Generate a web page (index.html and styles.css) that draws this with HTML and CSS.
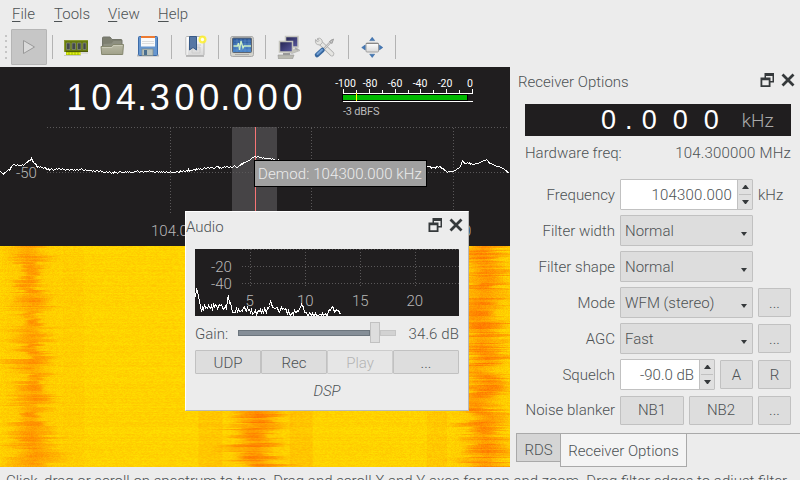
FILE: index.html
```html
<!DOCTYPE html>
<html lang="en">
<head>
<meta charset="utf-8">
<title>Receiver</title>
<link rel="stylesheet" href="styles.css">
</head>
<body>
<svg width="0" height="0" class="defs">
  <defs>
    <linearGradient id="paper" x1="0" y1="0" x2="0" y2="1"><stop offset="0" stop-color="#fff"/><stop offset="1" stop-color="#d8d8d8"/></linearGradient>
    <linearGradient id="screen" x1="0" y1="0" x2="0" y2="1"><stop offset="0" stop-color="#2a5594"/><stop offset="1" stop-color="#4a86cc"/></linearGradient>
    <linearGradient id="lcd" x1="0" y1="0" x2="1" y2="1"><stop offset="0" stop-color="#23234f"/><stop offset="1" stop-color="#5a5aa0"/></linearGradient>
    <linearGradient id="folder" x1="0" y1="0" x2="0" y2="1"><stop offset="0" stop-color="#babaa5"/><stop offset="1" stop-color="#a0a18a"/></linearGradient>
  </defs>
  <symbol id="dock-float" viewBox="0 0 14 14"><path d="M4.500 4.500V0H14v9.500h-3.500V8h2V3H6v1.500zM.500 4.500h10V14H.500zM2.300 7.300v5h6.400v-5z" fill="#35393b" fill-rule="evenodd"/></symbol>
  <symbol id="dock-close" viewBox="0 0 14 14"><path d="M1.500 1.500l11 11M12.500 1.500l-11 11" stroke="#35393b" stroke-width="2.800"/></symbol>
</svg>
<nav class="menubar">
  <span class="m1"><u>F</u>ile</span><span class="m2"><u>T</u>ools</span><span class="m3"><u>V</u>iew</span><span class="m4"><u>H</u>elp</span>
</nav>
<div class="toolbar">
  <span class="grip"></span>
  <button class="play"><svg width="12" height="16" viewBox="0 0 12 16"><path d="M.5 1.500L11.500 8L.5 14.500z" fill="#dadada" stroke="#999"/></svg></button>
  <i class="sep"></i>
  <svg class="ic" viewBox="0 0 24 24"><rect x="0" y="5.500" width="24" height="11.500" fill="#687c10"/><path d="M0 5.500h24M.5 6v11" stroke="#8b9b32"/><rect x="2" y="17" width="14.500" height="3" fill="#9bb900"/><path d="M2.500 18.500h14" stroke="#e9f31b" stroke-width="2" stroke-dasharray="2 1"/><path d="M2 16.500h22" stroke="#4c5a0b"/><path d="M2.500 8h3.500v6.500H2.500zM8 8h3.500v6.500H8zM13.500 8h3.500v6.500h-3.500zM19 8h3v6.500h-3z" fill="#43484a" stroke="#8d938a" stroke-width=".6"/><path d="M0 20.500h17M17 18h7" stroke="#bbb" stroke-opacity=".7"/></svg>
  <svg class="ic" viewBox="0 0 24 24"><path d="M2.500 12V3q0-1 1-1h6.500l2 2.500h9q1 0 1 1V12z" fill="#7d7f70" stroke="#73756a"/><path d="M3.500 9l8-.5 2-2.500h8v5h-18z" fill="#8d8f80"/><path d="M1 11.500h10.500l1.500-2h10.500l-.8 10h-21z" fill="url(#folder)" stroke="#85876f"/><path d="M2 12.500h10l1.500-2h9" fill="none" stroke="#cbcbb9"/></svg>
  <svg class="ic" viewBox="0 0 24 24"><path d="M1 20.500h22" stroke="#bbb" stroke-width="2"/><rect x="2.500" y="1.500" width="19" height="19" rx="1" fill="#6696cf" stroke="#3c6ba8"/><rect x="5" y="1" width="14" height="10.500" fill="#fafafa"/><rect x="5" y="1" width="14" height="2" fill="#ee7b32"/><path d="M6 6.500h12M6 8.500h12" stroke="#ddd"/><rect x="6" y="14" width="11" height="6.500" fill="#b9c2bc" stroke="#7e8987" stroke-width=".7"/><path d="M8 15h3v5H8z" fill="#496e8f"/></svg>
  <i class="sep"></i>
  <svg class="ic" viewBox="0 0 24 24"><path d="M3 21h18" stroke="#bbb" stroke-width="2"/><rect x="3" y="1.500" width="18" height="19" rx="1" fill="url(#paper)" stroke="#b5b5b5"/><path d="M4 2v18" stroke="#fff"/><path d="M9 12h8v6H9zM13 10h5" fill="#ddd" stroke="#ccc"/><path d="M6.500 1.500h7V15L10 12.500 6.500 15z" fill="#5777a4" stroke="#375a87"/><circle cx="19.500" cy="4.500" r="4" fill="#fff12e" opacity=".85"/><circle cx="19.500" cy="4.500" r="1.700" fill="#fffef0"/></svg>
  <i class="sep"></i>
  <svg class="ic" viewBox="0 0 24 24"><path d="M2 1.500h20q1.500 0 1.500 3v15q0 2-2 2H2.500q-2 0-2-2v-15q0-3 1.500-3z" fill="#d2d2cb" stroke="#aaa"/><rect x="2.500" y="3" width="19" height="14.500" rx="1" fill="url(#screen)" stroke="#5f6670"/><path d="M4 6h17M4 9h17M4 12h17M4 15h17M7 4v13M11 4v13M15 4v13M19 4v13" stroke="#75a2dc" stroke-width=".4"/><path d="M3.500 11h4l1-3 1 7 1.500-9 2 7 1-2h7" fill="none" stroke="#ceefc4" stroke-width="1.300"/><path d="M5 19.500h14" stroke="#aaa"/></svg>
  <i class="sep"></i>
  <svg class="ic" viewBox="0 0 24 24"><path d="M9 16l12-2 2 1.500-8 3z" fill="#c4c4bc" stroke="#aaa" stroke-width=".6"/><rect x="8.500" y="1.500" width="12.500" height="10.500" fill="url(#lcd)" stroke="#c6c6bf" stroke-width="1.500"/><path d="M18 13l3 2" stroke="#aaa" stroke-width="2"/><rect x="2.500" y="6.500" width="13" height="10.500" fill="url(#lcd)" stroke="#c3c3bb" stroke-width="1.500"/><path d="M6 18h7v2H6z" fill="#999"/><path d="M1 20h16l-1.500 4h-14z" fill="#b9b9b1" stroke="#999" stroke-width=".6"/></svg>
  <svg class="ic" viewBox="0 0 24 24"><path d="M5.500 6l13.500 13" stroke="#a8a8a8" stroke-width="4.600" stroke-linecap="round"/><path d="M5.500 6l13.500 13" stroke="#e5e5e2" stroke-width="3.200" stroke-linecap="round"/><path d="M2.500 4.500q-1 5.500 4.500 5.500 3.500-2 2-5-2-3-4.500-1.500l1.500 2-1.500 1.500z" fill="#e5e5e2" stroke="#a8a8a8" stroke-width=".8"/><path d="M19.500 5l-8.500 9" stroke="#aaa" stroke-width="2.200"/><path d="M19.500 5l-8.500 9" stroke="#ddd" stroke-width="1"/><path d="M16.500 6.500l4-2.500-1.500 4.500z" fill="#ccc" stroke="#888" stroke-width=".7"/><path d="M9.500 15l-5.500 5" stroke="#37679f" stroke-width="4.500" stroke-linecap="round"/><path d="M9 14.800l-4.500 4.200" stroke="#719fd3" stroke-width="2" stroke-linecap="round"/></svg>
  <i class="sep"></i>
  <svg class="ic" viewBox="0 0 24 24"><rect x="6" y="8" width="12.500" height="9" rx="1" fill="url(#paper)" stroke="#a0a0a0"/><path d="M6 8.500h12.500" stroke="#888"/><path d="M12.200 2.300l2.500 3.300h-5zM12.200 22.500l-2.500-3.300h5zM1.700 12.500l3.500-2.500v5zM22.800 12.500L19.300 10v5z" fill="#4479b7" stroke="#326198" stroke-width=".5"/></svg>
  <i class="sep"></i>
</div>
<main>
  <section class="radio">
    <div class="header">
      <div class="freq"><b>1</b><b>0</b><b>4</b><s>.</s><b>3</b><b>0</b><b>0</b><s>.</s><b>0</b><b>0</b><b>0</b></div>
      <svg class="meter" width="150" height="56" viewBox="330 70 150 56">
        <g class="ticks"><text x="345.500" y="87">-100</text><text x="370" y="87">-80</text><text x="395" y="87">-60</text><text x="420" y="87">-40</text><text x="445" y="87">-20</text><text x="470" y="87">0</text></g>
        <path d="M343 93.500h130M343 101.500h130M343.500 89v5M356.500 90v4M369.500 89v5M382.500 90v4M395.500 89v5M408.500 90v4M420.500 89v5M433.500 90v4M446.500 89v5M459.500 90v4M472.500 89v5" stroke="#fff"/>
        <rect x="342.500" y="94.500" width="125" height="6" fill="#00b800" stroke="#000"/><path d="M356.500 93v8" stroke="#ff0"/>
        <text class="db" x="343" y="115">-3 dBFS</text>
      </svg>
    </div>
    <svg class="spectrum" width="509" height="119" viewBox="0 127 509 119">
      <rect x="232" y="127" width="45" height="90" fill="#464446"/>
      <path class="grid" d="M47 127.500H509M47 172.500H509M170.500 128V215M311.500 128V215M453.500 128V215"/>
      <path d="M255.500 127V217" stroke="#f77576"/>
      <g class="axis"><text x="16" y="178">-50</text><text x="151" y="236">104.0</text><text x="463" y="236">0</text></g>
      <polyline id="trace" class="trace"/>
    </svg>
    <canvas id="fall" width="509" height="221"></canvas>
    <div class="tip">Demod: 104300.000 kHz</div>
    <aside class="audio">
      <header><span>Audio</span><svg width="14" height="14"><use href="#dock-float"/></svg><svg width="14" height="14"><use href="#dock-close"/></svg></header>
      <svg class="fft" width="264" height="67" viewBox="195 249 264 67">
        <path class="grid" d="M242 249.500H459M242 266.500H459M242 283.500H459M250.500 249V286M305.500 249V286M360.500 249V286M415.500 249V286"/>
        <g class="axis"><text x="211" y="272">-20</text><text x="211" y="289">-40</text><text x="245.500" y="306">5</text><text x="297" y="306">10</text><text x="352" y="306">15</text><text x="406.500" y="306">20</text></g>
        <polyline id="audioTrace" class="trace"/>
      </svg>
      <div class="gain"><span>Gain:</span><div class="slider"><i class="full"></i><i class="knob"></i><i class="rest"></i></div><span class="val">34.6 dB</span></div>
      <div class="btns"><button>UDP</button><button>Rec</button><button class="off">Play</button><button>...</button></div>
      <div class="dsp">DSP</div>
    </aside>
  </section>
  <section class="dock">
    <header><span>Receiver Options</span><svg width="14" height="14"><use href="#dock-float"/></svg><svg width="14" height="14"><use href="#dock-close"/></svg></header>
    <div class="offset"><b>0</b><s>.</s><b>0</b><b>0</b><b>0</b><span>kHz</span></div>
    <div class="hw"><span>Hardware freq:</span><span class="num">104.300000 MHz</span></div>
    <div class="form">
      <label>Frequency</label><div class="spin"><span class="num">104300.000</span><i><em class="up"></em><em class="down"></em></i></div><span class="unit">kHz</span>
      <label>Filter width</label><div class="combo">Normal</div><span></span>
      <label>Filter shape</label><div class="combo">Normal</div><span></span>
      <label>Mode</label><div class="combo">WFM (stereo)</div><button>...</button>
      <label>AGC</label><div class="combo">Fast</div><button>...</button>
      <label>Squelch</label><div class="pair"><div class="spin"><span>-90.0 dB</span><i><em class="up"></em><em class="down"></em></i></div><button class="sq">A</button></div><button>R</button>
      <label class="nb">Noise blanker</label><div class="pair nb"><button>NB1</button><button>NB2</button></div><button class="nb">...</button>
    </div>
    <div class="tabs"><span class="tab">RDS</span><span class="tab on">Receiver Options</span></div>
  </section>
</main>
<footer>Click, drag or scroll on spectrum to tune. Drag and scroll X and Y axes for pan and zoom. Drag filter edges to adjust filter.</footer>
<script src="plots.js"></script>
</body>
</html>
```
FILE: styles.css
```css
* { box-sizing: border-box; }
body { margin: 0; width: 800px; height: 480px; overflow: hidden; background: #ececec; color: #4d5254; font: 300 15px/18px Roboto, sans-serif; display: flex; flex-direction: column; }
.defs { position: absolute; }
b, s, em, i { font-style: normal; font-weight: inherit; text-decoration: none; }
button { font: inherit; color: inherit; background: #ddd; border: 1px solid #c1c1c1; border-radius: 1px; padding: 0; height: 29px; width: 100%; }
.menubar { height: 30px; padding: 5px 12px 0; display: flex; }
.menubar span { white-space: nowrap; }
.menubar u { text-underline-offset: 2px; text-decoration-thickness: 1px; }
.m1 { width: 42px; } .m2 { width: 54px; } .m3 { width: 50px; } .m4 { width: 40px; }
.toolbar { height: 37px; display: flex; align-items: flex-start; padding: 0 0 0 5px; }
.grip { width: 2px; height: 26px; margin: 5px 4px 0 0; background: repeating-linear-gradient(#c5c5c5 0 2px, transparent 2px 5.500px); }
.toolbar .play { width: 36px; height: 36px; margin-top: -1px; background: #c6c6c6; border-color: #b5b5b5; display: flex; align-items: center; justify-content: center; }
.sep { width: 1px; height: 24px; background: #b3b3b3; margin: 5px 11px 0 5px; flex: none; }
.ic { width: 24px; height: 24px; margin: 5px 12px 0 0; flex: none; }
.ic + .sep { margin-left: -1px; }
main { display: flex; height: 400px; }
.radio { width: 510px; position: relative; background: #201e1f; display: flex; flex-direction: column; }
.header { height: 60px; display: flex; }
.freq { width: 330px; padding: 10px 0 0 64px; display: flex; color: #fff; font: 36px/41px "Liberation Sans", sans-serif; }
.freq b { width: 24.850px; text-align: center; }
.freq s { width: 8.700px; text-indent: -1.500px; }
.meter { margin-top: 3px; }
.ticks { font-size: 10.500px; font-weight: 400; fill: #fff; text-anchor: middle; }
.db { font-size: 11px; font-weight: 400; fill: #bbb; letter-spacing: -.2px; }
.grid { fill: none; stroke: #5a5859; stroke-dasharray: 1 2; }
.axis { fill: #b8b7b7; font-size: 15px; }
.trace { fill: none; stroke: #fff; stroke-width: 1; shape-rendering: crispEdges; }
.spectrum, .fft, canvas { display: block; flex: none; }
.tip { position: absolute; left: 254px; top: 93px; width: 173px; height: 27px; border: 1px solid #000; background: #a0a0a0; color: #ececec; line-height: 27px; padding-left: 3px; white-space: nowrap; letter-spacing: .1px; }
.audio { position: absolute; left: 185px; top: 144px; width: 284px; height: 200px; background: #ececec; border: 1px solid #fff; border-right-color: #b9b9b9; border-bottom-color: #b9b9b9; padding: 0 9px; }
header { display: flex; align-items: center; gap: 7px; }
header span { flex: 1; }
.audio header { height: 37px; margin: 0 -4px 0 -9px; padding-bottom: 11px; }
.audio header span { padding-top: 4px; }
.fft { background: #201e1f; }
.gain { height: 34px; padding-top: 1px; display: flex; align-items: center; }
.gain .val { margin-left: auto; letter-spacing: .1px; }
.slider { width: 158px; margin: -2px 0 0 10px; display: flex; align-items: center; }
.full { width: 132px; height: 6px; background: #858e97; border: 1px solid #6c757d; }
.knob { width: 10px; height: 21px; background: #ddd; border: 1px solid #c1c1c1; }
.rest { width: 16px; height: 6px; background: #d2d2d2; border: 1px solid #c5c5c5; }
.btns { display: flex; }
.btns button { height: 24px; width: 66px; padding-top: 2px; }
.btns .off { background: #e6e6e6; color: #b4b4b4; border-color: #ccc; }
.dsp { text-align: center; font-style: italic; margin-top: 8px; }
.dock { width: 290px; padding: 0 0 0 6px; display: flex; flex-direction: column; }
.dock header { height: 29px; padding: 0 5px 3px 2px; }
.dock header span { padding-top: 5px; }
.offset { height: 32px; width: 266px; margin: 8px 0 0 9px; background: #201e1f; color: #fff; font: 27px/33px "Liberation Sans", sans-serif; padding-left: 68px; display: flex; position: relative; top: 1px; }
.offset b { width: 31px; text-align: center; }
.offset s { width: 9.700px; text-indent: 1px; }
.offset span { font: 300 19px/33px Roboto, sans-serif; color: #aaa; margin-left: 15px; }
.hw { margin: 9px 9px 0; display: flex; justify-content: space-between; }
.num { letter-spacing: .2px; }
.form { margin: 17px 9px 0; display: grid; grid-template-columns: 90px 133px 33px; gap: 5px; grid-auto-rows: 31px; align-items: center; }
.form label { text-align: right; white-space: nowrap; }
.combo { height: 31px; background: #ddd; border: 1px solid #c1c1c1; border-radius: 1px; padding: 0 5px 0 4px; line-height: 30px; display: flex; justify-content: space-between; align-items: center; }
.combo::after { content: ""; border: 3px solid transparent; border-top: 4px solid #35393b; border-bottom: 0; margin-top: 7px; }
.spin { height: 31px; flex: 1; display: flex; background: #fff; border: 1px solid #c1c1c1; border-radius: 1px; }
.spin span { flex: 1; text-align: right; padding-right: 5px; line-height: 30px; }
.spin i { width: 15px; background: linear-gradient(#c1c1c1, #c1c1c1) 50% 50% / 12px 1px no-repeat #e0e0e0; border-left: 1px solid #c1c1c1; display: flex; flex-direction: column; align-items: center; justify-content: space-between; padding: 5px 0; }
.up, .down { border: 3px solid transparent; width: 7px; }
.up { border-bottom: 4px solid #35393b; border-top: 0; }
.down { border-top: 4px solid #35393b; border-bottom: 0; }
.pair { display: flex; gap: 5px; align-items: center; }
.pair .sq { width: 33px; }
.form .nb { margin-top: -1px; }
.pair button { width: 64px; }
.unit { white-space: nowrap; }
.tabs { margin-top: 7px; height: 34px; border-top: 1px solid #a9a9a9; display: flex; align-items: flex-start; white-space: nowrap; }
.tab { width: 45px; height: 28px; border: 1px solid #a9a9a9; border-top: 0; background: #d5d5d5; line-height: 32px; text-align: center; }
.tab.on { width: 127px; height: 33px; margin-left: -1px; background: #f4f4f4; line-height: 34px; }
footer { height: 13px; padding: 5px 0 0 6px; overflow: hidden; white-space: nowrap; }
```
FILE: plots.js
```js
let seed = 7;
function rnd() { seed = (seed * 1664525 + 1013904223) % 4294967296; return seed / 4294967296; }

function trace(id, pts, noise, maxY) {
  const out = [];
  for (let i = 0; i < pts.length - 1; i++) {
    const [x0, y0] = pts[i], [x1, y1] = pts[i + 1];
    for (let x = x0; x < x1; x += 1) {
      const y = y0 + (y1 - y0) * (x - x0) / (x1 - x0) + (rnd() - 0.5) * noise;
      out.push((x + 0.5) + ',' + (Math.min(maxY, Math.round(y)) + 0.5));
    }
  }
  document.getElementById(id).setAttribute('points', out.join(' '));
}
trace('trace', [[0,171],[3,173],[8,170],[13,164],[22,165],[31,159],[37,166],[50,169],[80,169],[110,172],[150,171],[170,172],[190,170],[210,167],[225,167],[237,166],[248,160],[255,156],[268,158],[290,163],[420,167],[440,167],[447,171],[455,170],[459,168],[462,160],[465,163],[478,163],[485,159],[494,165],[502,168],[509,173]], 1.7, 240);
trace('audioTrace', [[195,295],[196,286],[198,297],[201,308],[206,306],[211,308],[215,305],[220,307],[226,305],[228,298],[232,311],[240,310],[246,308],[250,312],[260,312],[266,309],[270,301],[274,309],[283,310],[290,313],[298,310],[302,305],[306,314],[320,316],[327,315],[331,308],[336,311],[341,316]], 6, 315);

const canvas = document.getElementById('fall');
const ctx = canvas.getContext('2d');
const w = canvas.width, h = canvas.height;
const img = ctx.createImageData(w, h);
const stations = [{ c: 30, s: 0.27 }, { c: 256, s: 0.4 }, { c: 482, s: 0.4 }];
const faint = [[62, 84, 0.04], [197, 222, 0.09], [288, 312, 0.1], [425, 446, 0.08]];
stations.forEach(st => { st.off = 0; st.l = 16; st.r = 16; st.a = st.s; st.slow = 1; });
for (let y = 0; y < h; y++) {
  stations.forEach(st => {
    if (y % 16 === 0) st.slow = rnd() < 0.3 ? 0.45 : 1;
    if (rnd() < 0.6) {
      st.off = st.off * 0.8 + (rnd() - 0.5) * 8;
      st.l = (12 + rnd() * 14) * st.slow + (rnd() < 0.22 ? 10 : 0);
      st.r = (11 + rnd() * 14) * st.slow + (rnd() < 0.22 ? 10 : 0);
      st.a = st.s * (0.4 + rnd() * 0.8);
    }
  });
  const line = (rnd() - 0.5) * 0.06;
  for (let x = 0; x < w; x++) {
    let t = 0.08 + line + (rnd() - 0.5) * 0.16;
    faint.forEach(f => { if (x > f[0] && x < f[1]) t += f[2]; });
    stations.forEach(st => {
      const d = x - st.c - st.off, r = Math.abs(d) / (d < 0 ? st.l : st.r);
      t += st.a * Math.exp(-Math.pow(r, 4)) + 0.12 * Math.exp(-Math.pow(d / 8, 2)) + 0.05 * Math.exp(-Math.pow((x - st.c) / 30, 4));
    });
    const p = (y * w + x) * 4;
    img.data[p] = 255;
    img.data[p + 1] = Math.max(90, 222 - 135 * t);
    img.data[p + 2] = 0;
    img.data[p + 3] = 255;
  }
}
ctx.putImageData(img, 0, 0);
```
